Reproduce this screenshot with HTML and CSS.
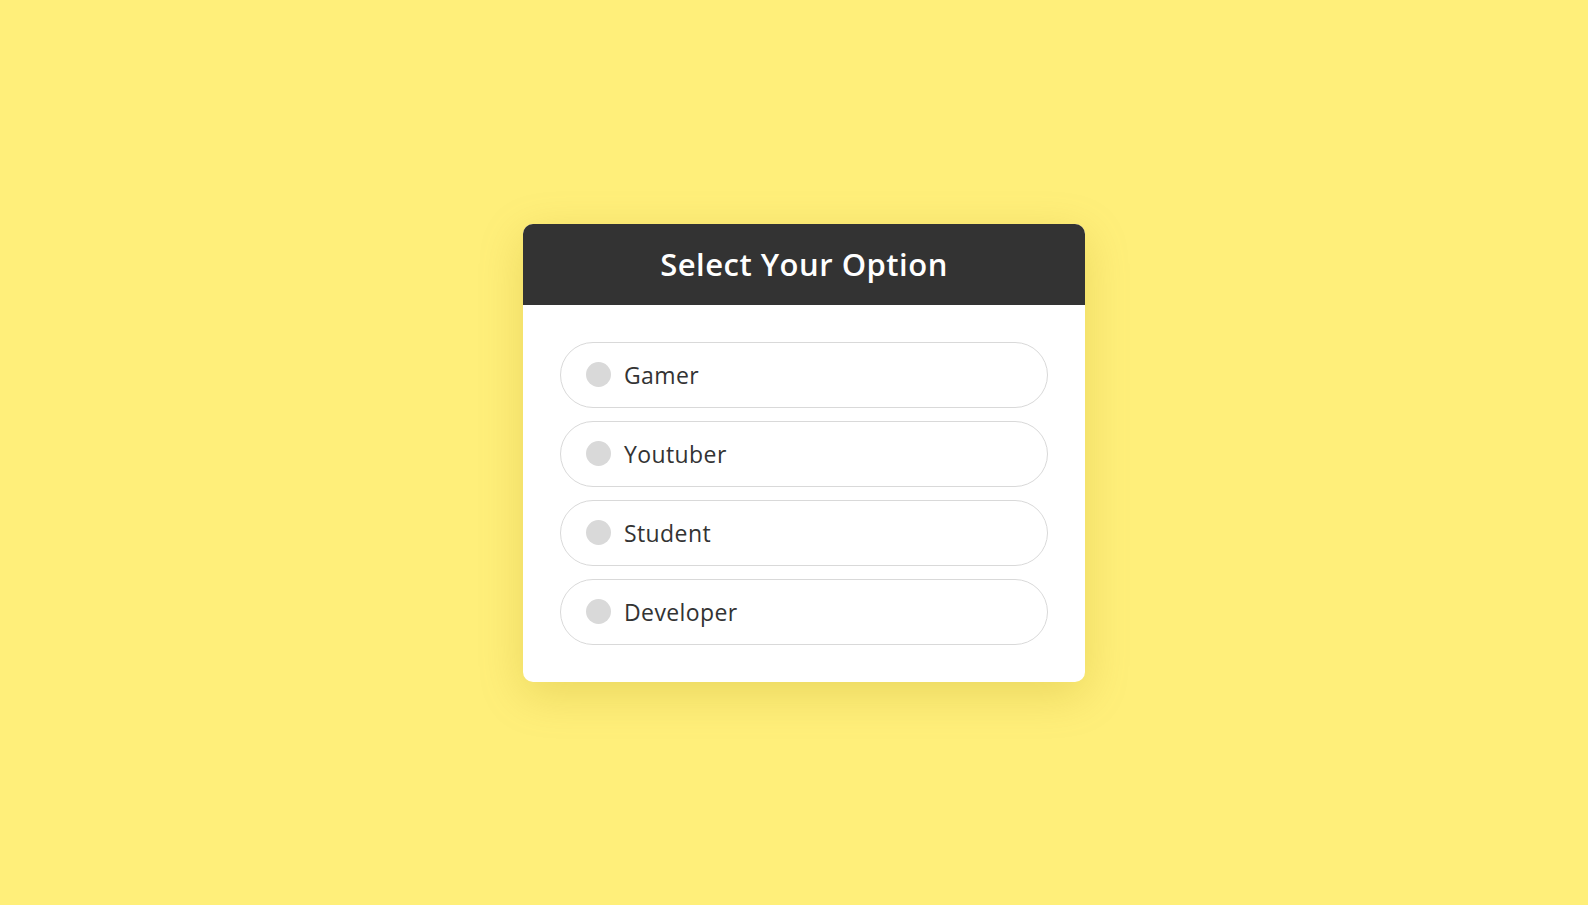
FILE: index.html
```html
<!DOCTYPE html>
<html lang="en">
<head>
    <meta charset="UTF-8">
    <meta name="viewport" content="width=device-width, initial-scale=1.0">
    <title>Select Your Option</title>
    <link rel="stylesheet" href="styles.css">
</head>
<body>
    <div class="wrapper">
        <div class="card">
            <div class="card-header">Select Your Option</div>
            <div class="card-body">
                <label class="option">
                    <input type="radio" name="role" value="gamer">
                    <span class="dot"></span>
                    <span class="option-text">Gamer</span>
                </label>
                <label class="option">
                    <input type="radio" name="role" value="youtuber">
                    <span class="dot"></span>
                    <span class="option-text">Youtuber</span>
                </label>
                <label class="option">
                    <input type="radio" name="role" value="student">
                    <span class="dot"></span>
                    <span class="option-text">Student</span>
                </label>
                <label class="option">
                    <input type="radio" name="role" value="developer">
                    <span class="dot"></span>
                    <span class="option-text">Developer</span>
                </label>
            </div>
        </div>
    </div>
</body>
</html>
```

FILE: styles.css
```css
* {
    margin: 0;
    padding: 0;
    box-sizing: border-box;
    font-family: 'Open Sans', 'Liberation Sans', sans-serif;
}

body {
    background: #ffef7a;
    min-height: 100vh;
}

.wrapper {
    min-height: 100vh;
    display: flex;
    align-items: center;
    justify-content: center;
    padding-left: 20px;
}

.card {
    width: 562px;
    background: #fff;
    border-radius: 10px;
    overflow: hidden;
    box-shadow: 0 12px 45px rgba(160, 130, 0, 0.22);
}

.card-header {
    height: 81px;
    background: #333;
    color: #fff;
    font-size: 31px;
    font-weight: 600;
    display: flex;
    align-items: center;
    justify-content: center;
    letter-spacing: 0.5px;
}

.card-body {
    padding: 37px;
    display: flex;
    flex-direction: column;
    gap: 13px;
}

.option {
    height: 66px;
    border: 1px solid #d9d9d9;
    border-radius: 33px;
    display: flex;
    align-items: center;
    padding-left: 25px;
    cursor: pointer;
}

.option input {
    display: none;
}

.dot {
    width: 25px;
    height: 25px;
    border-radius: 50%;
    background: #d9d9d9;
    margin-right: 13px;
}

.option-text {
    font-size: 23px;
    color: #333;
    letter-spacing: 0.4px;
}
```
